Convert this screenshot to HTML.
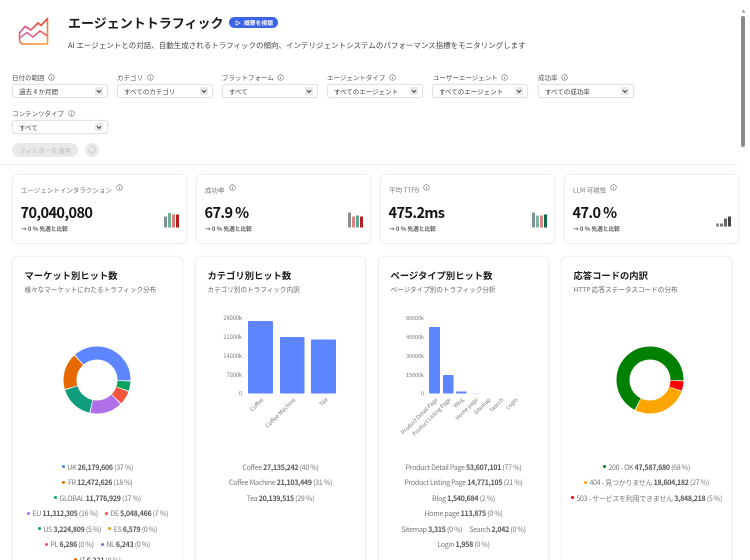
<!DOCTYPE html>
<html lang="ja"><head><meta charset="utf-8">
<style>
html,body{margin:0;padding:0;background:#fff;width:750px;height:560px;overflow:hidden}
body{font-family:"Noto Sans CJK JP","Liberation Sans",sans-serif;color:#222;position:relative}
.a{position:absolute;white-space:nowrap}
.lb{font-size:6.5px;color:#555;line-height:10px;height:10px}
.i{display:inline-block;width:7px;height:7px;margin-left:3.5px;vertical-align:-1px}
.sel{position:absolute;width:96px;height:14px;background:#fff;border:1px solid #e2e2e2;border-radius:3px;box-sizing:border-box;font-size:6.5px;color:#444;line-height:12px;padding-left:6px;box-shadow:0 0 1px rgba(0,0,0,.12)}
.sel:after{content:"";position:absolute;right:4px;top:2px;width:8px;height:8px;background:#e8e8e8;border-radius:2px}
.sel svg{position:absolute;right:5px;top:3.5px;z-index:1}
.k{position:absolute;top:174px;height:70px;background:#fff;border:1px solid #f0f0f0;border-radius:5px;box-sizing:border-box;box-shadow:0 0 2px rgba(0,0,0,.04)}
.k .t{position:absolute;left:8px;top:8.5px;font-size:6.5px;color:#777;line-height:10px;white-space:nowrap}
.k .t .i{margin-left:4px;vertical-align:1.5px}
.k .v{position:absolute;left:7.5px;top:27px;font-size:14.5px;font-weight:700;color:#111;line-height:22px;white-space:nowrap;letter-spacing:-.6px}
.k .s{position:absolute;left:8px;top:49px;font-size:5.7px;font-weight:700;color:#555;line-height:10px;white-space:nowrap}
.k .m{position:absolute;left:149.5px;top:36px}
.c{position:absolute;top:256px;height:320px;width:171px;background:#fff;border:1px solid #f0f0f0;border-radius:5px;box-sizing:border-box;box-shadow:0 0 2px rgba(0,0,0,.04)}
.c h3{position:absolute;left:11.5px;top:10px;margin:0;font-size:9.3px;font-weight:700;color:#1a1a1a;line-height:16px;white-space:nowrap}
.c p{position:absolute;left:11.5px;top:26px;margin:0;font-size:6.6px;color:#666;line-height:12px;white-space:nowrap}
.l{position:absolute;left:0;right:0;text-align:center;font-size:7px;color:#777;line-height:12px;white-space:nowrap;letter-spacing:-.25px;margin-top:-.5px}
.l b{font-weight:700;color:#555}
.l span{margin:0 3.5px}
.l i{display:inline-block;width:3px;height:3px;border-radius:50%;margin-right:2.5px;vertical-align:1.2px}
</style></head><body>
<svg width="0" height="0" style="position:absolute"><symbol id="ii" viewBox="0 0 7 7"><circle cx="3.5" cy="3.5" r="2.8" fill="none" stroke="#777" stroke-width=".6"/><path d="M3.5 3 V5.2" stroke="#777" stroke-width=".7"/><circle cx="3.5" cy="2" r=".4" fill="#777"/></symbol></svg>

<svg class="a" style="left:17px;top:15px" width="34" height="32" viewBox="17 15 34 32" fill="none">
<defs><linearGradient id="lg" x1="19" y1="44" x2="48" y2="18" gradientUnits="userSpaceOnUse"><stop offset="0" stop-color="#b265dc"/><stop offset=".5" stop-color="#e0607a"/><stop offset=".75" stop-color="#e8523c"/><stop offset="1" stop-color="#e8453c"/></linearGradient>
<linearGradient id="lg2" x1="30" y1="20" x2="48" y2="44" gradientUnits="userSpaceOnUse"><stop offset="0" stop-color="#e05a50"/><stop offset="1" stop-color="#f5a02a"/></linearGradient></defs>
<path d="M19.5 33 L25 26.5 L31 30 L38 23 L41 25.5 L47.5 18.5 V44 H24 Q19.5 44 19.5 40 Z" stroke="url(#lg2)" stroke-width="1.6" stroke-linejoin="round"/>
<path d="M19.5 33 L25 26.5 L31 30 L38 23 L41 25.5 L47.5 18.5" stroke="url(#lg)" stroke-width="1.6" stroke-linejoin="round"/>
<path d="M19.5 38 L27 32.5 L33 37 L40 31 L47.5 36" stroke="url(#lg)" stroke-width="1.6" stroke-linejoin="round"/>
</svg>

<div class="a" style="left:68px;top:13px;font-size:13px;font-weight:700;color:#1b1b1b;line-height:20px">エージェントトラフィック</div>
<div class="a" style="left:229px;top:17px;width:49px;height:11px;background:#3b63e6;border-radius:6px;color:#fff;font-size:5.8px;font-weight:700;line-height:11px;padding-left:15px;box-sizing:border-box">概要を視聴
<svg class="a" style="left:6px;top:2.5px" width="6" height="6" viewBox="0 0 6 6"><path d="M1 .8 L5 3 L1 5.2 Z" fill="none" stroke="#fff" stroke-width=".7"/></svg></div>
<div class="a" style="left:68px;top:39.5px;font-size:7.5px;color:#444;line-height:12px">AI エージェントとの対話、自動生成されるトラフィックの傾向、インテリジェントシステムのパフォーマンス指標をモニタリングします</div>

<div class="a lb" style="left:12px;top:72px">日付の範囲<svg class="i"><use href="#ii"/></svg></div>
<div class="a lb" style="left:117px;top:72px">カテゴリ<svg class="i"><use href="#ii"/></svg></div>
<div class="a lb" style="left:222px;top:72px">プラットフォーム<svg class="i"><use href="#ii"/></svg></div>
<div class="a lb" style="left:327px;top:72px">エージェントタイプ<svg class="i"><use href="#ii"/></svg></div>
<div class="a lb" style="left:433px;top:72px">ユーザーエージェント<svg class="i"><use href="#ii"/></svg></div>
<div class="a lb" style="left:538px;top:72px">成功率<svg class="i"><use href="#ii"/></svg></div>
<div class="a lb" style="left:12px;top:108px">コンテンツタイプ<svg class="i"><use href="#ii"/></svg></div>

<div class="sel" style="left:12px;top:84px">過去 4 か月間<svg width="6" height="5" viewBox="0 0 6 5"><path d="M1 1.2 L3 3.4 L5 1.2" fill="none" stroke="#333" stroke-width="1"/></svg></div>
<div class="sel" style="left:117px;top:84px">すべてのカテゴリ<svg width="6" height="5" viewBox="0 0 6 5"><path d="M1 1.2 L3 3.4 L5 1.2" fill="none" stroke="#333" stroke-width="1"/></svg></div>
<div class="sel" style="left:222px;top:84px">すべて<svg width="6" height="5" viewBox="0 0 6 5"><path d="M1 1.2 L3 3.4 L5 1.2" fill="none" stroke="#333" stroke-width="1"/></svg></div>
<div class="sel" style="left:327px;top:84px">すべてのエージェント<svg width="6" height="5" viewBox="0 0 6 5"><path d="M1 1.2 L3 3.4 L5 1.2" fill="none" stroke="#333" stroke-width="1"/></svg></div>
<div class="sel" style="left:432px;top:84px">すべてのエージェント<svg width="6" height="5" viewBox="0 0 6 5"><path d="M1 1.2 L3 3.4 L5 1.2" fill="none" stroke="#333" stroke-width="1"/></svg></div>
<div class="sel" style="left:538px;top:84px">すべての成功率<svg width="6" height="5" viewBox="0 0 6 5"><path d="M1 1.2 L3 3.4 L5 1.2" fill="none" stroke="#333" stroke-width="1"/></svg></div>
<div class="sel" style="left:12px;top:120px">すべて<svg width="6" height="5" viewBox="0 0 6 5"><path d="M1 1.2 L3 3.4 L5 1.2" fill="none" stroke="#333" stroke-width="1"/></svg></div>

<div class="a" style="left:12px;top:143px;width:66px;height:14px;background:#e9e9e9;border-radius:7px;color:#bdbdbd;font-size:6.5px;line-height:14px;text-align:center">フィルターを適用</div>
<div class="a" style="left:85px;top:143px;width:14px;height:14px;background:#e9e9e9;border-radius:50%"></div>
<svg class="a" style="left:88px;top:146px" width="8" height="8" viewBox="0 0 8 8"><path d="M2 1.5 A3.2 3.2 0 1 1 1 4" fill="none" stroke="#c8c8c8" stroke-width=".8"/></svg>
<div class="a" style="left:0;top:164px;width:738px;height:1px;background:#f1f1f1"></div>

<div class="k" style="left:12px;width:175px"><div class="t">エージェントインタラクション<svg class="i"><use href="#ii"/></svg></div><div class="v">70,040,080</div><div class="s">→ 0 % 先週と比較</div>
<svg class="m" width="18" height="18" viewBox="0 0 18 18"><rect x="1" y="5.5" width="3" height="11" fill="#7f9296"/><rect x="5" y="2" width="3" height="14.5" fill="#6fae9a"/><rect x="9" y="3.5" width="3" height="13" fill="#d97a7a"/><rect x="13" y="3.5" width="3" height="13" fill="#b3201f"/></svg></div>
<div class="k" style="left:196px;width:175px"><div class="t">成功率<svg class="i"><use href="#ii"/></svg></div><div class="v">67.9 %</div><div class="s">→ 0 % 先週と比較</div>
<svg class="m" width="18" height="18" viewBox="0 0 18 18"><rect x="1" y="1.5" width="3" height="15" fill="#8e8e8e"/><rect x="5" y="5.5" width="3" height="11" fill="#d98484"/><rect x="9" y="4.5" width="3" height="12" fill="#5fa595"/><rect x="13" y="5.5" width="3" height="11" fill="#b3201f"/></svg></div>
<div class="k" style="left:380px;width:175px"><div class="t">平均 TTFB<svg class="i"><use href="#ii"/></svg></div><div class="v">475.2ms</div><div class="s">→ 0 % 先週と比較</div>
<svg class="m" width="18" height="18" viewBox="0 0 18 18"><rect x="1" y="1.5" width="3" height="15" fill="#7f9296"/><rect x="5" y="4.5" width="3" height="12" fill="#7fb3a2"/><rect x="9" y="4.5" width="3" height="12" fill="#d98484"/><rect x="13" y="3.5" width="3" height="13" fill="#0f6b4a"/></svg></div>
<div class="k" style="left:564px;width:175px"><div class="t">LLM 可視性<svg class="i"><use href="#ii"/></svg></div><div class="v">47.0 %</div><div class="s">→ 0 % 先週と比較</div>
<svg class="m" width="18" height="18" viewBox="0 0 18 18"><rect x="1" y="12.5" width="3" height="3" fill="#8a8a8a"/><rect x="5" y="12.5" width="3" height="3" fill="#777"/><rect x="9" y="7.5" width="3" height="8" fill="#666"/><rect x="13" y="5.5" width="3" height="10" fill="#444"/></svg></div>

<div class="c" style="left:12px"><h3>マーケット別ヒット数</h3><p>様々なマーケットにわたるトラフィック分布</p>
<div class="l" style="top:205px"><span><i style="background:#5b7fd8"></i>UK <b>26,179,606</b> (37 %)</span></div>
<div class="l" style="top:220.5px"><span><i style="background:#e66a00"></i>FR <b>12,472,626</b> (18 %)</span></div>
<div class="l" style="top:236px"><span><i style="background:#0f9d7e"></i>GLOBAL <b>11,776,929</b> (17 %)</span></div>
<div class="l" style="top:251.5px"><span><i style="background:#b06ee8"></i>EU <b>11,312,305</b> (16 %)</span><span><i style="background:#f5533d"></i>DE <b>5,048,466</b> (7 %)</span></div>
<div class="l" style="top:267px"><span><i style="background:#0d9a5f"></i>US <b>3,224,809</b> (5 %)</span><span><i style="background:#e0a020"></i>ES <b>6,579</b> (0 %)</span></div>
<div class="l" style="top:282.5px"><span><i style="background:#e8507a"></i>PL <b>6,286</b> (0 %)</span><span><i style="background:#5b7fd8"></i>NL <b>6,243</b> (0 %)</span></div>
<div class="l" style="top:298px"><span><i style="background:#e66a00"></i>IT <b>6,221</b> (0 %)</span></div>
</div>
<div class="c" style="left:195px"><h3>カテゴリ別ヒット数</h3><p>カテゴリ別のトラフィック内訳</p>
<div class="l" style="top:205px"><span>Coffee <b>27,135,242</b> (40 %)</span></div>
<div class="l" style="top:220.5px"><span>Coffee Machine <b>21,103,449</b> (31 %)</span></div>
<div class="l" style="top:236px"><span>Tea <b>20,139,515</b> (29 %)</span></div>
</div>
<div class="c" style="left:378px"><h3>ページタイプ別ヒット数</h3><p>ページタイプ別のトラフィック分析</p>
<div class="l" style="top:205px"><span>Product Detail Page <b>53,607,101</b> (77 %)</span></div>
<div class="l" style="top:220.5px"><span>Product Listing Page <b>14,771,105</b> (21 %)</span></div>
<div class="l" style="top:236px"><span>Blog <b>1,540,684</b> (2 %)</span></div>
<div class="l" style="top:251.5px"><span>Home page <b>113,875</b> (0 %)</span></div>
<div class="l" style="top:267px"><span>Sitemap <b>3,315</b> (0 %)</span><span>Search <b>2,042</b> (0 %)</span></div>
<div class="l" style="top:282.5px"><span>Login <b>1,958</b> (0 %)</span></div>
</div>
<div class="c" style="left:561px"><h3>応答コードの内訳</h3><p>HTTP 応答ステータスコードの分布</p>
<div class="l" style="top:205px"><span><i style="background:#008000"></i>200 - OK <b>47,587,680</b> (68 %)</span></div>
<div class="l" style="top:220.5px"><span><i style="background:#ffa500"></i>404 - 見つかりません <b>18,604,182</b> (27 %)</span></div>
<div class="l" style="top:236px"><span><i style="background:#f00"></i>503 - サービスを利用できません <b>3,848,218</b> (5 %)</span></div>
</div>

<svg class="a" style="left:60px;top:343px" width="74" height="74" viewBox="-37 -37 74 74" fill="none" stroke-width="13">
<g transform="scale(1,-1)">
<circle r="27" pathLength="100" stroke="#5c85ff" stroke-dasharray="36.5 63.5" stroke-dashoffset="0"/>
<circle r="27" pathLength="100" stroke="#e66a00" stroke-dasharray="17.5 82.5" stroke-dashoffset="-37"/>
<circle r="27" pathLength="100" stroke="#0f9d7e" stroke-dasharray="16.5 83.5" stroke-dashoffset="-55"/>
<circle r="27" pathLength="100" stroke="#b06ee8" stroke-dasharray="15.5 84.5" stroke-dashoffset="-72"/>
<circle r="27" pathLength="100" stroke="#f5533d" stroke-dasharray="6.5 93.5" stroke-dashoffset="-88"/>
<circle r="27" pathLength="100" stroke="#0da15f" stroke-dasharray="4.5 95.5" stroke-dashoffset="-95"/>
</g></svg>
<svg class="a" style="left:613px;top:343px" width="74" height="74" viewBox="-37 -37 74 74" fill="none" stroke-width="13">
<g transform="scale(1,-1)">
<circle r="27" pathLength="100" stroke="#008000" stroke-dasharray="67.6 32.4" stroke-dashoffset="0"/>
<circle r="27" pathLength="100" stroke="#ffa500" stroke-dasharray="26.6 73.4" stroke-dashoffset="-68"/>
<circle r="27" pathLength="100" stroke="#ff0000" stroke-dasharray="4.6 95.4" stroke-dashoffset="-95"/>
</g></svg>

<svg class="a" style="left:195px;top:300px" width="171" height="150" viewBox="195 300 171 150" font-family="Noto Sans CJK JP, Liberation Sans, sans-serif" font-size="5.6" fill="#777">
<g text-anchor="end"><text x="242" y="320">28000k</text><text x="242" y="339">21000k</text><text x="242" y="358">14000k</text><text x="242" y="377">7000k</text><text x="242" y="395.5">0</text></g>
<rect x="248" y="321" width="25" height="72.5" rx="1" fill="#5c85ff"/><rect x="280" y="337" width="24.5" height="56.5" rx="1" fill="#5c85ff"/><rect x="311" y="339.5" width="25" height="54" rx="1" fill="#5c85ff"/>
<g text-anchor="end"><text transform="translate(264,400) rotate(-45)">Coffee</text><text transform="translate(296,400) rotate(-45)">Coffee Machine</text><text transform="translate(328,400) rotate(-45)">Tea</text></g>
</svg>
<svg class="a" style="left:378px;top:300px" width="171" height="150" viewBox="378 300 171 150" font-family="Noto Sans CJK JP, Liberation Sans, sans-serif" font-size="5.4" fill="#777">
<g text-anchor="end"><text x="424" y="320">60000k</text><text x="424" y="339">45000k</text><text x="424" y="358">30000k</text><text x="424" y="377">15000k</text><text x="424" y="395.5">0</text></g>
<rect x="429" y="327" width="11" height="66.5" rx="1" fill="#5c85ff"/><rect x="443" y="375" width="10.5" height="18.5" rx="1" fill="#5c85ff"/><rect x="456" y="391.5" width="10.5" height="2" rx=".5" fill="#5c85ff"/><rect x="470" y="393" width="10" height=".5" fill="#c9d6ff"/>
<g text-anchor="end"><text transform="translate(438,400) rotate(-45)">Product Detail Page</text><text transform="translate(451,400) rotate(-45)">Product Listing Page</text><text transform="translate(464,400) rotate(-45)">Blog</text><text transform="translate(478,400) rotate(-45)">Home page</text><text transform="translate(491,400) rotate(-45)">Sitemap</text><text transform="translate(504,400) rotate(-45)">Search</text><text transform="translate(518,400) rotate(-45)">Login</text></g>
</svg>

<div class="a" style="left:741px;top:16px;width:4px;height:131px;background:#8a8a8a;border-radius:2px"></div>
<svg class="a" style="left:740.5px;top:9px" width="5" height="4" viewBox="0 0 5 4"><path d="M2.5 .5 L4.5 3.5 H.5 Z" fill="#9a9a9a"/></svg>
</body></html>
